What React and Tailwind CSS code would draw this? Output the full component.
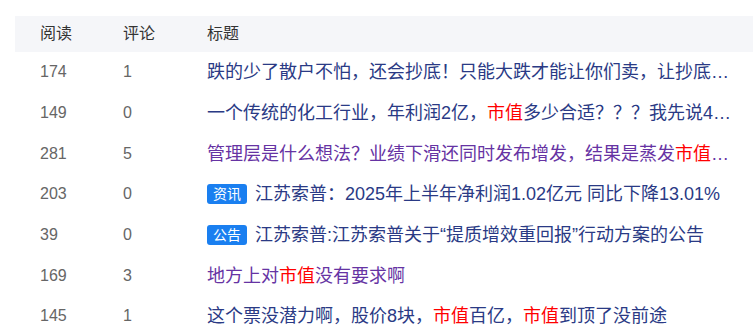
const ROWS = [
  { read: 174, reply: 1, parts: ['跌的少了散户不怕，还会抄底！只能大跌才能让你们卖，让抄底的散户们亏钱'] },
  { read: 149, reply: 0, parts: ['一个传统的化工行业，年利润2亿，', { hl: '市值' }, '多少合适？？？我先说40亿'] },
  { read: 281, reply: 5, visited: true, parts: ['管理层是什么想法？业绩下滑还同时发布增发，结果是蒸发', { hl: '市值' }, '好几个亿'] },
  { read: 203, reply: 0, tag: '资讯', parts: ['江苏索普：2025年上半年净利润1.02亿元 同比下降13.01%'] },
  { read: 39, reply: 0, tag: '公告', parts: ['江苏索普:江苏索普关于“提质增效重回报”行动方案的公告'] },
  { read: 169, reply: 3, visited: true, parts: ['地方上对', { hl: '市值' }, '没有要求啊'] },
  { read: 145, reply: 1, parts: ['这个票没潜力啊，股价8块，', { hl: '市值' }, '百亿，', { hl: '市值' }, '到顶了没前途'] },
]

function Row({ row }) {
  return (
    <div className="grid grid-cols-[83px_84px_533px] items-center h-[40.67px] pl-[25px]">
      <span className="text-[16px] text-[#666]">{row.read}</span>
      <span className="text-[16px] text-[#666]">{row.reply}</span>
      <div className="flex items-center min-w-0">
        {row.tag && (
          <span className="shrink-0 mr-2 h-5 px-[6px] rounded-[3px] bg-[#1a7ff0] text-white text-[14px] leading-5">
            {row.tag}
          </span>
        )}
        <span
          className={
            'min-w-0 truncate text-[18px] leading-6 ' +
            (row.visited ? 'text-[#6633a3]' : 'text-[#2a3a85]')
          }
        >
          {row.parts.map((p, i) =>
            typeof p === 'string' ? p : <span key={i} className="text-[#ff0000]">{p.hl}</span>
          )}
        </span>
      </div>
    </div>
  )
}

export default function App() {
  return (
    <div className="w-[753px] h-[336px] bg-white overflow-hidden pt-4 pl-[15px] font-['Liberation_Sans','Noto_Sans_CJK_SC',sans-serif]">
      {/* Header */}
      <div className="grid grid-cols-[83px_84px_1fr] items-center h-9 pl-[25px] bg-[#f5f6f9] text-[16px] text-[#333]">
        <span>阅读</span>
        <span>评论</span>
        <span>标题</span>
      </div>
      {ROWS.map((r, i) => (
        <Row key={i} row={r} />
      ))}
    </div>
  )
}
